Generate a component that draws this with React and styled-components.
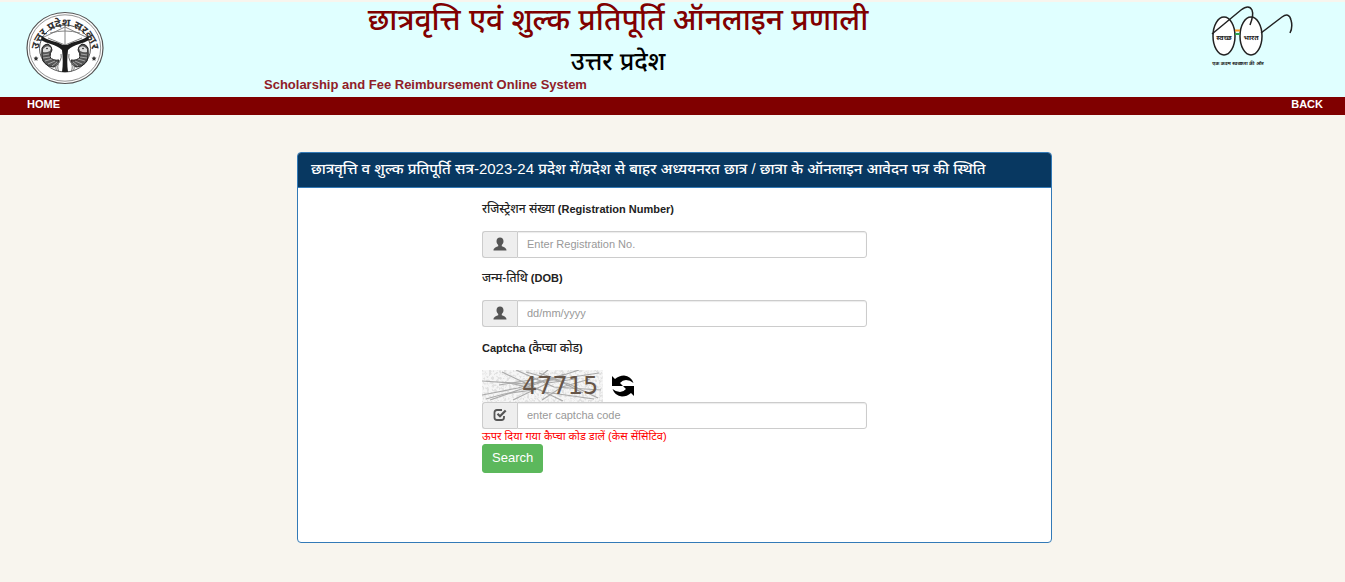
import React, {useState} from "react"
import styled, {createGlobalStyle} from "styled-components";

const GlobalStyle = createGlobalStyle`
  * {
    box-sizing: border-box;
  }

  body {
    margin: 0;
    background: #f8f5ee;
    color: #222;
    font-family: "Liberation Sans", "Noto Sans Devanagari", "Noto Sans", sans-serif;
    font-size: 11px;
  }
`

const Header = styled.header`
  display: grid;
  grid-template-columns: 264fr 708fr 373fr;
  height: 95px;
  margin-top: 2px;
  background: #e0ffff;
`

const Emblem = styled.div`
  padding: 9px 0 0 26px;
`

const Mission = styled.div`
  padding: 3px 50px 0 0;
  text-align: right;
`

const Titles = styled.div`
  text-align: center;
  white-space: nowrap;
`

const Title = styled.h1`
  margin: 0;
  color: #800000;
  font-size: 30px;
  font-weight: 500;
  line-height: 36px;
`

const State = styled.h2`
  margin: 0;
  padding-top: 8px;
  color: #000;
  font-size: 25px;
  font-weight: 500;
  line-height: 30px;
`

const Tagline = styled.div`
  padding-top: 1px;
  color: #902028;
  font-size: 13px;
  font-weight: bold;
  line-height: 16px;
  text-align: left;
`

const Nav = styled.nav`
  display: flex;
  justify-content: space-between;
  height: 18px;
  padding: 0 22px 0 27px;
  background: #800000;
`

const NavLink = styled.a`
  color: #fff;
  font-size: 11px;
  font-weight: bold;
  line-height: 15px;
  text-decoration: none;
`

const Main = styled.main`
  padding: 37px 0 39px 4px;
`

const Panel = styled.section`
  width: 755px;
  max-width: 100%;
  min-height: 391px;
  margin: 0 auto;
  border: 1px solid #337ab7;
  border-radius: 4px;
  background: #fff;
`

const PanelTitle = styled.h3`
  margin: 0;
  padding: 0 13px 2px;
  border-bottom: 1px solid #337ab7;
  border-radius: 3px 3px 0 0;
  background: #083861;
  color: #fff;
  font-size: 15px;
  font-weight: 500;
  line-height: 32px;
  white-space: nowrap;
`

const Form = styled.form`
  width: 385px;
  max-width: 100%;
  margin: 0 auto;
  padding-top: 13px;
`

const Label = styled.label`
  display: block;
  height: 30px;
  font-size: 11px;
  font-weight: bold;
  line-height: 16px;
`

const Hindi = styled.span`
  font-size: 12px;
  font-weight: 500;
`

const InputGroup = styled.div`
  display: flex;
  height: 27px;
  margin-bottom: ${(props) => props.$gap || 0}px;
`

const Addon = styled.span`
  display: flex;
  align-items: center;
  justify-content: center;
  width: 35px;
  padding-bottom: 2px;
  border: 1px solid #ccc;
  border-right: 0;
  border-radius: 3px 0 0 3px;
  background: #eee;
  color: #555;
`

const Input = styled.input`
  flex: 1;
  min-width: 0;
  padding: 0 9px 2px;
  border: 1px solid #ccc;
  border-radius: 0 3px 3px 0;
  background: #fff;
  box-shadow: inset 0 1px 1px rgba(0, 0, 0, 0.08);
  color: #555;
  font-family: inherit;
  font-size: 11px;

  &::placeholder {
    color: #999;
    opacity: 1;
  }
`

const CaptchaRow = styled.div`
  display: flex;
  align-items: center;
  gap: 9px;
  height: 32px;
`

const RefreshButton = styled.button`
  display: flex;
  padding: 0;
  border: 0;
  background: none;
  cursor: pointer;
`

const Hint = styled.div`
  color: #f00;
  font-size: 11px;
  line-height: 15px;
`

const SearchButton = styled.button`
  display: block;
  height: 29px;
  padding: 0 9px 2px;
  border: 1px solid #5cb85c;
  border-radius: 3px;
  background: #5cb85c;
  color: #fff;
  font-family: inherit;
  font-size: 13px;
  cursor: pointer;
`

function StateEmblem() {
    return (
        <svg width="78" height="74" viewBox="0 0 78 74" fontFamily="Noto Sans Devanagari, Noto Sans, sans-serif">
            <ellipse cx="39" cy="37" rx="38" ry="35.5" fill="#fff" stroke="#555" strokeWidth="1.2"/>
            <ellipse cx="39" cy="37" rx="35.7" ry="33.2" fill="none" stroke="#777" strokeWidth="0.8"/>
            <ellipse cx="39" cy="37.5" rx="25.5" ry="23.5" fill="#fff" stroke="#555" strokeWidth="1"/>
            <path id="emblemArc" d="M12 43A27 27.5 0 0 1 66 43" fill="none"/>
            <text fontSize="11" fontWeight="bold" fill="#333" textAnchor="middle">
                <textPath href="#emblemArc" startOffset="50%">उत्तर प्रदेश सरकार</textPath>
            </text>
            {/* bow and arrow over the two rivers */}
            <path d="M39 14V36M18 26L39 16L60 26M22 27L39 34L56 27M24 22Q39 18 54 22" fill="none" stroke="#777" strokeWidth="0.9"/>
            <path d="M16 25C22 30 30 30 37 34H41C48 30 56 30 62 25L63 29C57 33 48 33 42 39C41 47 41 54 42 61H36C37 54 37 47 36 39C30 33 21 33 15 29Z" fill="#1c1c1c"/>
            {/* a fish on either side */}
            {[1, -1].map((side) => (
                <g key={side} transform={`translate(39 0) scale(${side} 1)`}>
                    <path d="M-23 37Q-21 33-17 33Q-13 35-13 39Q-15 42-15 46Q-12 50-6 49Q-6 54-11 56Q-18 56-22 50Q-24 44-23 37Z" fill="#555" stroke="#222"/>
                    <path d="M-22 38Q-18 33-14 37L-15 40Q-19 42-22 41Z" fill="#ddd"/>
                    <path d="M-22 44L-16 43M-22 47L-15 46M-20 50L-13 48M-17 53L-10 50M-13 55L-8 51" stroke="#bbb" strokeWidth="0.8"/>
                    <path d="M-6 61Q-9 55-5 50Q-3 46-4 43M-8 60Q-11 56-7 52" fill="none" stroke="#777"/>
                    <circle cx="-18" cy="37.5" r="0.8" fill="#111"/>
                </g>
            ))}
            <path d="M10 45l.8 1.6 1.7.2-1.3 1.2.3 1.8-1.5-.9-1.5.9.3-1.8-1.3-1.2 1.7-.2ZM68 45l.8 1.6 1.7.2-1.3 1.2.3 1.8-1.5-.9-1.5.9.3-1.8-1.3-1.2 1.7-.2Z" fill="#333"/>
        </svg>
    )
}

function SwachhBharat() {
    return (
        <svg width="84" height="66" viewBox="0 0 84 66" fontFamily="Noto Sans Devanagari, Noto Sans, sans-serif" fontWeight="bold" fill="#222">
            <g fill="none" stroke="#222" strokeWidth="1.5">
                <ellipse cx="13" cy="31" rx="11" ry="19" fill="#fff"/>
                <ellipse cx="40" cy="31" rx="11" ry="19" fill="#fff"/>
                <path d="M1 29L30 5Q38-1 41 5Q43 10 39 20"/>
                <path d="M50 28L71 12Q78 7 80 15Q82 22 79 28"/>
            </g>
            <path d="M24 25.500h5" stroke="#f7941d" strokeWidth="2"/>
            <path d="M24 29h5" stroke="#2e9e4f" strokeWidth="2"/>
            <text x="13" y="35" fontSize="7" textAnchor="middle">स्वच्छ</text>
            <text x="40" y="35" fontSize="7" textAnchor="middle">भारत</text>
            <text x="27" y="60" fontSize="5" textAnchor="middle">एक कदम स्वच्छता की ओर</text>
        </svg>
    )
}

function UserIcon() {
    return (
        <svg width="14" height="14" viewBox="0 0 14 14" fill="currentColor" aria-hidden="true">
            <path d="M7 .5C9.200.5 10.500 2 10.500 4.200C10.500 6 9.600 7 8.800 8V9.200C10.500 10 13.500 10.600 13.500 13.500H.5C.5 10.600 3.500 10 5.200 9.200V8C4.400 7 3.500 6 3.500 4.200C3.500 2 4.800.5 7 .5Z"/>
        </svg>
    )
}

function CheckIcon() {
    return (
        <svg width="14" height="14" viewBox="0 0 14 14" fill="none" stroke="currentColor" strokeWidth="1.8" aria-hidden="true">
            <path d="M9 2H4Q1.500 2 1.500 4.500V9.500Q1.500 12 4 12H8.500Q11 12 11 9.500V8"/>
            <path d="M4.500 5.800L7 8.300L12.700 2.500" strokeWidth="2.2"/>
        </svg>
    )
}

function RefreshIcon() {
    return (
        <svg width="22" height="22" viewBox="0 0 22 22" fill="#000" aria-hidden="true">
            <path id="refreshArrow" d="M0 1L3 4Q7 .5 12 .5Q19 1 21.500 8Q18 5 14 5Q10.500 5 8 8L11 11H0Z"/>
            <use href="#refreshArrow" transform="rotate(180 11 11)"/>
        </svg>
    )
}

function Captcha({code}) {
    return (
        <svg width="121" height="32" viewBox="0 0 121 32">
            <filter id="grain">
                <feTurbulence type="fractalNoise" baseFrequency="0.4" numOctaves="2" seed="4"/>
                <feColorMatrix values="0 0 0 0 0.75  0 0 0 0 0.75  0 0 0 0 0.75  5 0 0 0 -2.3"/>
            </filter>
            <rect width="121" height="32" fill="#f6f6f6"/>
            <rect width="121" height="32" filter="url(#grain)"/>
            <g fill="none" stroke="#aaa" strokeWidth="1.2">
                <path d="M0 11L44 14L117 3M8 30L54 14L97 0M20 2L62 22L112 29M34 0L72 17L119 20"/>
                <path d="M0 25L36 18L83 4M31 30L66 13L93 9M23 12L58 20L81 31M44 2L87 14L116 28"/>
                <path d="M4 29L22 24L51 20M60 30L80 17L108 9M57 3L72 8L101 23M17 15L55 9L66 0"/>
            </g>
            <text x="40" y="24" fontFamily="DejaVu Sans, sans-serif" fontSize="24" fill="#665548">{code}</text>
        </svg>
    )
}

export default function App() {
    const [form, setForm] = useState({registration: "", dob: "", captcha: ""})

    const handleChange = (e) => {
        setForm({...form, [e.target.name]: e.target.value})
    }

    return (<>
        <GlobalStyle/>
        <Header>
            <Emblem><StateEmblem/></Emblem>
            <Titles>
                <Title>छात्रवृत्ति एवं शुल्क प्रतिपूर्ति ऑनलाइन प्रणाली</Title>
                <State>उत्तर प्रदेश</State>
                <Tagline>Scholarship and Fee Reimbursement Online System</Tagline>
            </Titles>
            <Mission><SwachhBharat/></Mission>
        </Header>
        <Nav>
            <NavLink href="#home">HOME</NavLink>
            <NavLink href="#back">BACK</NavLink>
        </Nav>
        <Main>
            <Panel>
                <PanelTitle>छात्रवृत्ति व शुल्क प्रतिपूर्ति सत्र-2023-24 प्रदेश में/प्रदेश से बाहर अध्ययनरत छात्र / छात्रा के ऑनलाइन आवेदन पत्र की स्थिति</PanelTitle>
                <Form onSubmit={(e) => e.preventDefault()}>
                    <Label htmlFor="registration"><Hindi>रजिस्ट्रेशन संख्या</Hindi> (Registration Number)</Label>
                    <InputGroup $gap={12}>
                        <Addon><UserIcon/></Addon>
                        <Input id="registration" name="registration" placeholder="Enter Registration No." value={form.registration} onChange={handleChange}/>
                    </InputGroup>
                    <Label htmlFor="dob"><Hindi>जन्म-तिथि</Hindi> (DOB)</Label>
                    <InputGroup $gap={13}>
                        <Addon><UserIcon/></Addon>
                        <Input id="dob" name="dob" placeholder="dd/mm/yyyy" value={form.dob} onChange={handleChange}/>
                    </InputGroup>
                    <Label htmlFor="captcha">Captcha (<Hindi>कैप्चा कोड</Hindi>)</Label>
                    <CaptchaRow>
                        <Captcha code="47715"/>
                        <RefreshButton type="button" aria-label="Refresh captcha"><RefreshIcon/></RefreshButton>
                    </CaptchaRow>
                    <InputGroup>
                        <Addon><CheckIcon/></Addon>
                        <Input id="captcha" name="captcha" placeholder="enter captcha code" value={form.captcha} onChange={handleChange}/>
                    </InputGroup>
                    <Hint>ऊपर दिया गया कैप्चा कोड डालें (केस सेंसिटिव)</Hint>
                    <SearchButton type="submit">Search</SearchButton>
                </Form>
            </Panel>
        </Main>
    </>)
}
